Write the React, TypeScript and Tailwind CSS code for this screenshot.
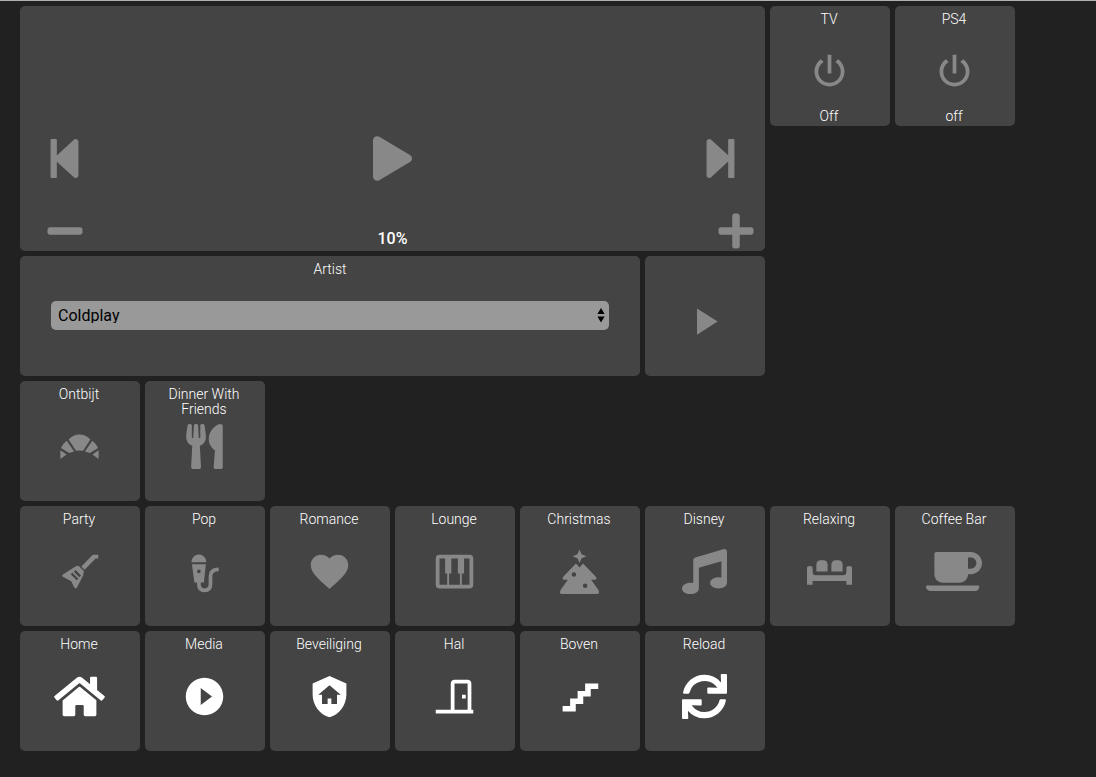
import type { ReactNode } from "react";
import {
  FaCoffee,
  FaHome,
  FaMinus,
  FaMusic,
  FaPlay,
  FaPlus,
  FaStepBackward,
  FaStepForward,
  FaSync,
  FaUtensils,
} from "react-icons/fa";
import { MdFavorite, MdPlayArrow, MdPlayCircleFilled } from "react-icons/md";

const ICON = "size-[45px] shrink-0";
const TRANSPORT_ICON = "h-[45px] w-[39px] shrink-0";
const VOLUME_ICON = "h-10 w-9 shrink-0";

function Glyph({ d, children }: { d?: string; children?: ReactNode }) {
  return (
    <svg viewBox="0 0 24 24" className={ICON} fill="currentColor" fillRule="evenodd" aria-hidden="true">
      {d ? <path d={d} /> : children}
    </svg>
  );
}

const power = (
  <Glyph d="M16.56 5.44L15.11 6.89C16.84 7.94 18 9.83 18 12A6 6 0 0 1 6 12C6 9.83 7.16 7.94 8.88 6.88L7.44 5.44C5.36 6.88 4 9.28 4 12A8 8 0 0 0 20 12C20 9.28 18.64 6.88 16.56 5.44M13 3H11V13H13Z" />
);

const croissant = (
  <Glyph>
    <path d="M6.2 8.2Q8.7 5.6 12 5.6Q15.3 5.6 17.8 8.2L13.9 14.3Q12 13.9 10.1 14.3Z" />
    <path d="M5.2 8.9L9.1 14.6L6.5 15.5L2.1 12.8Q3.2 10.3 5.2 8.9Z" />
    <path d="M18.8 8.9L14.9 14.6L17.5 15.5L21.9 12.8Q20.8 10.3 18.8 8.9Z" />
    <path d="M1.8 14L5.1 16.2L1.8 18.6Z" />
    <path d="M22.2 14L18.9 16.2L22.2 18.6Z" />
  </Glyph>
);

const guitar = (
  <Glyph>
    <path d="M22 3V5.1H20.6L14.7 11L13 9.3L19.1 3Z" />
    <path d="M12.3 9.7L14.3 11.7L14 14L10.8 20.3Q10 21.6 9.1 20.4L7.6 17.2L3.3 14.9Q2.2 14.2 3.5 13.3L9.9 9.3Q11.3 8.5 12.3 9.7ZM8.2 12.6L7.3 13.5L10.5 16.7L11.4 15.8ZM9.9 11.2L9 12.1L11.9 15L12.8 14.1Z" />
  </Glyph>
);

const microphone = (
  <Glyph>
    <path d="M5 7.1V6.9A4 4 0 0 1 13 6.9V7.1Z" />
    <path d="M5.3 8.1H12.7L11.7 17.9H6.6ZM9 10.9A1 1 0 1 0 9 12.9A1 1 0 1 0 9 10.9Z" />
    <path
      d="M9 17.5V18.8Q9 22 12 22Q15.2 22 15.2 18.8V14.4Q15.2 11 19.6 10.9"
      fill="none"
      stroke="currentColor"
      strokeWidth="2"
    />
  </Glyph>
);

const piano = (
  <Glyph d="M4 3H20A2 2 0 0 1 22 5V19A2 2 0 0 1 20 21H4A2 2 0 0 1 2 19V5A2 2 0 0 1 4 3M4 5V19H8.1V13H7V5ZM10.3 5V13H9.1V19H14.9V13H13.8V5ZM17.1 5V13H15.9V19H20V5Z" />
);

const christmasTree = (
  <Glyph>
    <path d="M12 0.2L13.1 2.8L15.7 3.8L13.1 4.9L12 7.5L10.9 4.9L8.3 3.8L10.9 2.8Z" />
    <path d="M10.1 7.7L12 9.8L13.9 7.7L20.7 14.8Q21.6 16.2 20.2 16.4H18.2L22.1 21.8Q23 23.8 21.4 24H2.6Q1 23.8 1.9 21.8L5.8 16.4H3.8Q2.4 16.2 3.3 14.8ZM9 12.4A1.2 1.2 0 1 0 9 14.8A1.2 1.2 0 1 0 9 12.4ZM15 18.4A1.2 1.2 0 1 0 15 20.8A1.2 1.2 0 1 0 15 18.4Z" />
  </Glyph>
);

const bed = (
  <Glyph>
    <path d="M0 19V10Q0 9 1.5 9Q3 9 3 10V12.3Q3 14 4.7 14H19.3Q21 14 21 12.3V10Q21 9 22.5 9Q24 9 24 10V19H21V17.1H3V19Z" />
    <path d="M5 12V8.4Q5 6 7.4 6H8.6Q11 6 11 8.4V12Z" />
    <path d="M13 12V8.4Q13 6 15.4 6H16.6Q19 6 19 8.4V12Z" />
  </Glyph>
);

const shieldHome = (
  <Glyph d="M11 13H13V16H16V11H18L12 6L6 11H8V16H11V13M12 1L21 5V11C21 16.55 17.16 21.74 12 23C6.84 21.74 3 16.55 3 11V5L12 1Z" />
);

const door = (
  <Glyph d="M16 11H18V13H16V11M12 3H19C20.11 3 21 3.89 21 5V19H22V21H2V19H10V5C10 3.89 10.89 3 12 3M12 5V19H19V5H12Z" />
);

const stairs = <Glyph d="M15 5V9H11V13H7V17H3V20H10V16H14V12H18V8H22V5H15Z" />;

interface TileProps {
  label?: string;
  name?: string;
  state?: string;
  icon: ReactNode;
  active?: boolean;
  place?: string;
}

function Tile({ label, name, state, icon, active = false, place = "" }: TileProps) {
  return (
    <button
      type="button"
      aria-label={name}
      className={`relative flex cursor-pointer items-center justify-center rounded-[5px] bg-[#444] pt-[10px] pr-0.5 ${active ? "text-white" : "text-[#888]"} ${place}`}
    >
      {label && <span className="absolute top-[6px] right-4 left-3.5 text-white">{label}</span>}
      {icon}
      {state && <span className="absolute right-4 bottom-[2px] left-3.5 text-white">{state}</span>}
    </button>
  );
}

const playlists = [
  { label: "Party", icon: guitar },
  { label: "Pop", icon: microphone },
  { label: "Romance", icon: <MdFavorite className={ICON} /> },
  { label: "Lounge", icon: piano },
  { label: "Christmas", icon: christmasTree },
  { label: "Disney", icon: <FaMusic className={ICON} /> },
  { label: "Relaxing", icon: bed },
  { label: "Coffee Bar", icon: <FaCoffee className="h-[45px] w-14 shrink-0" /> },
];

const pages = [
  { label: "Home", icon: <FaHome className="h-[45px] w-[51px] shrink-0" /> },
  { label: "Media", icon: <MdPlayCircleFilled className={ICON} /> },
  { label: "Beveiliging", icon: shieldHome },
  { label: "Hal", icon: door },
  { label: "Boven", icon: stairs },
  { label: "Reload", icon: <FaSync className={ICON} /> },
];

function Player() {
  return (
    <section
      aria-label="Player"
      className="col-span-6 row-span-2 flex flex-col justify-end rounded-[5px] bg-[#444] text-[#888]"
    >
      <div className="flex items-center justify-between px-[25px]">
        <button type="button" aria-label="Previous"><FaStepBackward className={TRANSPORT_ICON} /></button>
        <button type="button" aria-label="Play"><FaPlay className={TRANSPORT_ICON} /></button>
        <button type="button" aria-label="Next"><FaStepForward className={TRANSPORT_ICON} /></button>
      </div>
      <div className="mt-[30px] grid h-10 grid-cols-3 items-center pr-[11px] pl-[27px]">
        <button type="button" aria-label="Volume down" className="justify-self-start"><FaMinus className={VOLUME_ICON} /></button>
        <span className="self-end justify-self-center pr-4 pb-[5px] text-[16px] leading-[15px] font-medium text-white">10%</span>
        <button type="button" aria-label="Volume up" className="justify-self-end"><FaPlus className={VOLUME_ICON} /></button>
      </div>
    </section>
  );
}

function ArtistPicker() {
  return (
    <section className="col-span-5 rounded-[5px] bg-[#444] px-[31px] pt-[6px] text-center text-white">
      <label htmlFor="artist" className="block">Artist</label>
      <div className="relative mt-6">
        <select
          id="artist"
          defaultValue="Coldplay"
          className="block h-[29px] w-full appearance-none rounded-[5px] bg-[#999] px-[7px] font-['Roboto',sans-serif] text-[16px] font-normal text-black"
        >
          <option>Coldplay</option>
        </select>
        <svg
          viewBox="0 0 8 16"
          className="pointer-events-none absolute top-[6px] right-1 h-4 w-2"
          fill="black"
          aria-hidden="true"
        >
          <path d="M4 1L7.6 7H0.4ZM4 15.5L7.6 9.5H0.4Z" />
        </svg>
      </div>
    </section>
  );
}

export default function App() {
  return (
    <main className="min-h-screen border-t border-[#b0b0b0] bg-[#212121] px-5 pt-[5px] font-['Roboto','Liberation_Sans',sans-serif] text-[14px] leading-[15px] font-light">
      <div className="grid auto-rows-[120px] grid-cols-[repeat(8,120px)] gap-[5px]">
        <Player />
        <Tile label="TV" state="Off" icon={power} />
        <Tile label="PS4" state="off" icon={power} />
        <ArtistPicker />
        <Tile name="Play artist" icon={<MdPlayArrow className={ICON} />} place="col-start-6" />
        <Tile label="Ontbijt" icon={croissant} place="col-start-1" />
        <Tile label="Dinner With Friends" icon={<FaUtensils className={ICON} />} />
        {playlists.map((tile, i) => (
          <Tile key={tile.label} {...tile} place={i === 0 ? "col-start-1" : ""} />
        ))}
        {pages.map((tile) => (
          <Tile key={tile.label} {...tile} active />
        ))}
      </div>
    </main>
  );
}
